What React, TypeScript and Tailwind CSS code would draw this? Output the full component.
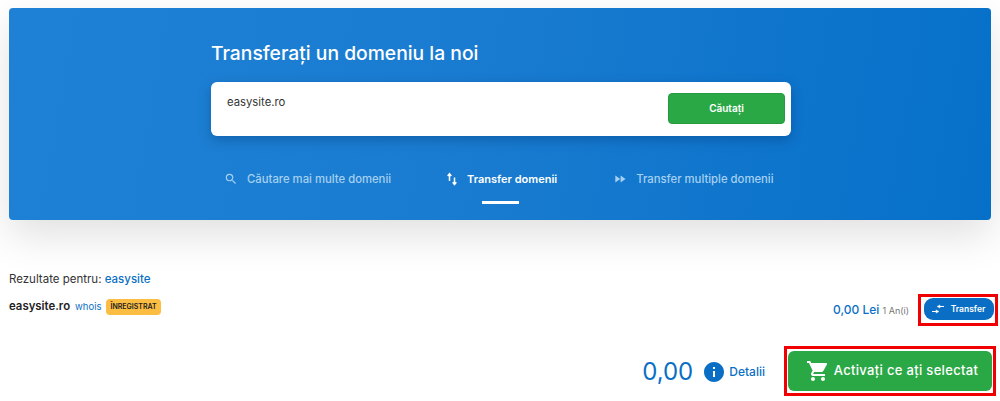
import { MdFastForward, MdInfo, MdSearch, MdShoppingCart } from "react-icons/md";

function TransferVertIcon() {
  return (
    <svg viewBox="0 0 14 14" className="h-[14px] w-[14px]" fill="none" stroke="currentColor" strokeWidth="1.5">
      <path d="M4.5 9V2M2.7 4 4.5 1.8 6.3 4" />
      <path d="M9.5 5.5v7M7.7 10.3l1.8 2.2 1.8-2.2" />
    </svg>
  );
}

function TransferHorizIcon() {
  return (
    <svg viewBox="0 0 14 10" className="h-[10px] w-[14px]" fill="currentColor" stroke="currentColor" strokeWidth="1">
      <path d="M8 2.5h5" fill="none" />
      <path d="M6 2.5l3-1.6v3.2z" strokeWidth="0.4" />
      <path d="M1 7.5h5" fill="none" />
      <path d="M8 7.5 5 5.9v3.2z" strokeWidth="0.4" />
    </svg>
  );
}

export default function App() {
  return (
    <div className="h-[401px] overflow-hidden bg-white px-[9px] pt-2 font-['Inter','Noto_Sans',sans-serif] text-[#333]">
      <section className="h-[212px] rounded bg-[linear-gradient(100deg,#1f81d5_0%,#1a7cd0_45%,#0670c9_100%)] pt-[31px] pl-[2px] shadow-[0_16px_40px_rgba(0,0,0,0.12)]">
        <div className="mx-auto w-[580px]">
          <h1 className="text-[19.3px] leading-7 font-medium text-white">Transferați un domeniu la noi</h1>
          <div className="mt-[15px] flex h-[54px] justify-between rounded-md bg-white pt-3 pr-[6px] pl-4 shadow-[0_4px_12px_rgba(0,50,110,0.35)]">
            <span className="text-[11.3px] leading-4 text-[#333]">easysite.ro</span>
            <button className="-mt-px h-[31px] w-[117px] rounded border border-[#259a3f] bg-[#2ba846] text-[10px] font-semibold text-white">
              Căutați
            </button>
          </div>
          <nav className="mt-[34px] flex gap-[55px] pl-[13px] text-[11.3px] leading-[18px] font-medium">
            <div className="flex items-center gap-[9px] text-[#a6d0f0]">
              <MdSearch className="h-[14px] w-[14px]" />
              <span>Căutare mai multe domenii</span>
            </div>
            <div className="relative -ml-px flex items-center gap-2 text-white">
              <TransferVertIcon />
              <span className="text-[11px] font-semibold">Transfer domenii</span>
              <span className="absolute top-[31px] left-[37px] h-[3px] w-[37px] bg-white" />
            </div>
            <div className="ml-px flex items-center gap-[9px] text-[#a6d0f0]">
              <MdFastForward className="h-[14px] w-[14px]" />
              <span>Transfer multiple domenii</span>
            </div>
          </nav>
        </div>
      </section>

      <p className="mt-[50px] text-[11.5px] leading-[18px]">
        Rezultate pentru: <span className="font-medium text-[#0a6fc4]">easysite</span>
      </p>

      <div className="mt-[6px] flex h-[32px] items-center justify-between">
        <div className="flex items-center gap-[5px] pb-[6px]">
          <span className="text-[11.4px] font-semibold text-[#222]">easysite.ro</span>
          <span className="text-[9.5px] text-[#0a6fc4]">whois</span>
          <span className="rounded bg-[#fbbd42] px-1 py-[2px] text-[7px] leading-3 font-semibold text-[#222]">ÎNREGISTRAT</span>
        </div>
        <div className="-mr-[7px] flex items-center gap-[9px]">
          <span className="text-[12px] font-medium text-[#0a6fc4]">
            0,00 Lei <span className="text-[9px] font-normal text-[#777]">1 An(i)</span>
          </span>
          <div className="border-[3px] border-[#f00000] pt-[1px] pr-[1px] pb-[3px] pl-[3px]">
            <button className="flex h-[22px] w-[70px] items-center justify-center gap-[6px] rounded-[9px] bg-[#0a6fc4] pr-[2px] text-[8.5px] font-semibold text-white">
              <TransferHorizIcon />
              Transfer
            </button>
          </div>
        </div>
      </div>

      <div className="-mr-[5px] mt-5 flex items-center justify-end">
        <span className="mt-[2px] text-[24px] text-[#0a6fc4]">0,00</span>
        <MdInfo className="mt-[2px] ml-[9px] h-6 w-6 text-[#0a6fc4]" />
        <span className="mt-[2px] mr-[19px] ml-[3px] text-[12px] font-medium text-[#0a6fc4]">Detalii</span>
        <div className="border-[3px] border-[#f00000] px-[1px] py-[2px]">
          <button className="flex h-10 w-[204px] items-center justify-center gap-1 rounded-md bg-[#2ba846] pl-[4px] text-[13px] font-medium tracking-wide text-white">
            <MdShoppingCart className="h-6 w-6" />
            Activați ce ați selectat
          </button>
        </div>
      </div>
    </div>
  );
}
